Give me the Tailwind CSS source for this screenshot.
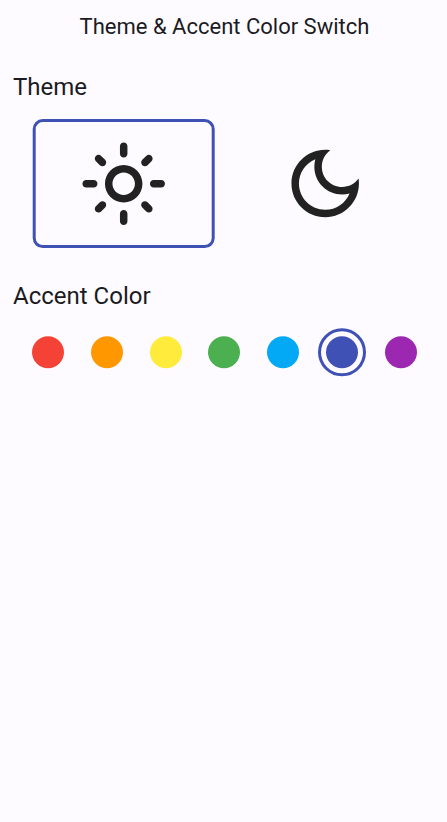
<!DOCTYPE html>
<html lang="en">
<head>
<meta charset="utf-8">
<title>Theme &amp; Accent Color Switch</title>
<script src="https://cdn.jsdelivr.net/npm/@tailwindcss/browser@4"></script>
</head>
<body class="h-screen overflow-hidden bg-[#fdfbff] font-[Roboto,sans-serif] text-[#1b1b1f]">
<header class="flex h-[53px] items-center justify-center pl-[2px] text-[22px] leading-7"><h1>Theme &amp; Accent Color Switch</h1></header>
<main class="pl-[13px]">
  <h2 class="mt-[18px] h-8 text-2xl leading-8">Theme</h2>
  <div class="mt-[16px] ml-[20px] flex gap-[20px]">
    <button aria-label="Light theme" class="flex h-[129px] w-[182px] [transform:translate(-0.3px,0.1px)] items-center justify-center rounded-[10px] border-3 border-[#3f51b5]">
      <svg class="size-[90px] [transform:translateY(-0.4px)] fill-[#222]" viewBox="0 0 24 24"><path d="M12 9c1.65 0 3 1.35 3 3s-1.35 3-3 3-3-1.35-3-3 1.35-3 3-3m0-2c-2.76 0-5 2.24-5 5s2.24 5 5 5 5-2.24 5-5-2.24-5-5-5zM2 13h2c.55 0 1-.45 1-1s-.45-1-1-1H2c-.55 0-1 .45-1 1s.45 1 1 1zm18 0h2c.55 0 1-.45 1-1s-.45-1-1-1h-2c-.55 0-1 .45-1 1s.45 1 1 1zM11 2v2c0 .55.45 1 1 1s1-.45 1-1V2c0-.55-.45-1-1-1s-1 .45-1 1zm0 18v2c0 .55.45 1 1 1s1-.45 1-1v-2c0-.55-.45-1-1-1s-1 .45-1 1zM5.99 4.58c-.39-.39-1.03-.39-1.41 0-.39.39-.39 1.03 0 1.41l1.06 1.06c.39.39 1.03.39 1.41 0s.39-1.03 0-1.41L5.99 4.58zm12.37 12.37c-.39-.39-1.03-.39-1.41 0-.39.39-.39 1.03 0 1.41l1.06 1.06c.39.39 1.03.39 1.41 0 .39-.39.39-1.03 0-1.41l-1.06-1.06zm1.06-10.96c.39-.39.39-1.03 0-1.41-.39-.39-1.03-.39-1.41 0l-1.06 1.06c-.39.39-.39 1.03 0 1.41s1.03.39 1.41 0l1.06-1.06zM7.05 18.36c.39-.39.39-1.03 0-1.41-.39-.39-1.03-.39-1.41 0l-1.06 1.06c-.39.39-.39 1.03 0 1.41s1.03.39 1.41 0l1.06-1.06z"/></svg>
    </button>
    <button aria-label="Dark theme" class="flex h-[129px] w-[182px] [transform:translate(-0.8px,-0.4px)] items-center justify-center rounded-[10px]">
      <svg class="size-[90px] fill-[#222]" viewBox="0 0 24 24"><path d="M9.37 5.51C9.19 6.15 9.1 6.82 9.1 7.5c0 4.08 3.32 7.4 7.4 7.4.68 0 1.35-.09 1.99-.27C17.45 17.19 14.93 19 12 19c-3.86 0-7-3.14-7-7 0-2.93 1.81-5.45 4.37-6.49zM12 3c-4.97 0-9 4.03-9 9s4.03 9 9 9 9-4.03 9-9c0-.46-.04-.92-.1-1.36-.98 1.37-2.58 2.26-4.4 2.26-2.98 0-5.4-2.42-5.4-5.4 0-1.81.89-3.42 2.26-4.4-.44-.06-.9-.1-1.36-.1z"/></svg>
    </button>
  </div>
  <h2 class="mt-[32px] h-8 text-2xl leading-8">Accent Color</h2>
  <div class="mt-[16px] ml-[5.5px] grid h-12 w-[412px] [transform:translate(0px,0.3px)] grid-cols-7 place-items-center">
    <button aria-label="Red" class="size-8 rounded-full bg-[#f44336]"></button>
    <button aria-label="Orange" class="size-8 rounded-full bg-[#ff9800]"></button>
    <button aria-label="Yellow" class="size-8 rounded-full bg-[#ffeb3b]"></button>
    <button aria-label="Green" class="size-8 rounded-full bg-[#4caf50]"></button>
    <button aria-label="Light blue" class="size-8 rounded-full bg-[#03a9f4]"></button>
    <button aria-label="Indigo" class="flex size-12 items-center justify-center rounded-full border-3 border-[#3f51b5]"><span class="size-8 rounded-full bg-[#3f51b5]"></span></button>
    <button aria-label="Purple" class="size-8 rounded-full bg-[#9c27b0]"></button>
  </div>
</main>
</body>
</html>
